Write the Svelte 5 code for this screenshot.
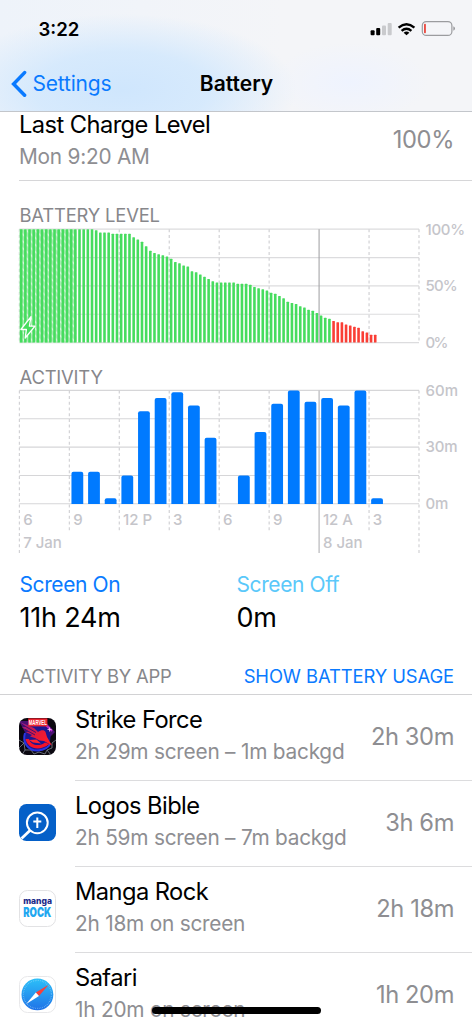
<script>
  const levels = [
    100, 100, 100, 100, 100, 100, 100, 100, 100, 100, 100, 100, 100, 100, 100, 100, 100, 100,
    99, 97, 97, 97, 96, 96, 96, 96, 96, 93, 91, 89, 85, 81, 79, 78, 77, 76, 74, 71, 70, 68,
    67, 63, 62, 60, 58, 56, 54, 53, 53, 53, 53, 53, 52, 52, 52, 51, 49, 48, 47, 46, 44, 43,
    41, 39, 36, 35, 34, 32, 31, 29, 28, 26, 24, 22, 21, 19, 18, 18, 16, 15, 14, 13, 10, 9, 7, 7
  ];

  // minutes of use per hour, starting at 6 AM
  const minutes = [0, 0, 0, 17, 17, 3, 15, 49, 56, 59, 52, 35, 0, 15, 38, 53, 60, 54, 56, 52, 60, 3];

  const hours = ['6', '9', '12 P', '3', '6', '9', '12 A', '3'];
  const gridX = [0, 1, 2, 3, 4, 5, 6, 7, 8].map((i) => 19.4 + i * 49.95);
  const gridY = [0, 1, 2, 3, 4].map((i) => i * 28.35);

  const apps = [
    { id: 'strike', name: 'Strike Force', detail: '2h 29m screen – 1m backgd', time: '2h 30m' },
    { id: 'logos', name: 'Logos Bible', detail: '2h 59m screen – 7m backgd', time: '3h 6m' },
    { id: 'manga', name: 'Manga Rock', detail: '2h 18m on screen', time: '2h 18m' },
    { id: 'safari', name: 'Safari', detail: '1h 20m on screen', time: '1h 20m' }
  ];
</script>

<div class="screen">
  <header>
    <div class="status">
      <span class="clock">3:22</span>
      <svg class="indicators" width="86" height="16" viewBox="370 21 86 16">
        <rect x="370.6" y="30.2" width="4" height="5" rx="1" />
        <rect x="376.2" y="28" width="4" height="7.2" rx="1" />
        <rect x="382" y="25.4" width="4" height="9.8" rx="1" fill="#c9cacd" />
        <rect x="387.7" y="22.9" width="4" height="12.3" rx="1" fill="#c9cacd" />
        <g fill="none" stroke="#000" stroke-width="2.4">
          <path d="M398.6 27.6Q406.5 20.9 414.4 27.6" />
          <path d="M401.6 30.8Q406.5 26.7 411.4 30.8" />
        </g>
        <path d="M403.6 32.8Q406.5 30.4 409.4 32.8L406.5 35.3Z" />
        <rect x="422.3" y="21.6" width="29.6" height="13.8" rx="4" fill="none" stroke="#9b9c9f" stroke-width="1.2" />
        <rect x="424" y="23.8" width="1.9" height="9.4" rx="0.8" fill="#ea4e45" />
        <path d="M453.4 26.3Q455 27 455 28.5T453.4 30.8Z" fill="#929396" />
      </svg>
    </div>
    <nav>
      <a class="back" href="#settings">
        <svg width="17" height="28" viewBox="0 0 17 28">
          <path d="M14.6 2.6L3.6 14L14.6 25.2" fill="none" stroke="#0a7aff" stroke-width="3.5" stroke-linecap="round" stroke-linejoin="miter" />
        </svg>
        <span>Settings</span>
      </a>
      <h1>Battery</h1>
    </nav>
  </header>

  <section class="charge">
    <div>
      <div class="title">Last Charge Level</div>
      <div class="sub">Mon 9:20 AM</div>
    </div>
    <span class="value">100%</span>
  </section>

  <h2 class="level-heading">BATTERY LEVEL</h2>
  <svg class="chart" width="472" height="136" viewBox="0 -1.2 472 136">
    <defs>
      <pattern id="hatch" width="8.33" height="7" patternUnits="userSpaceOnUse">
        <rect width="8.33" height="7" fill="#a9ebb3" />
        <path d="M-2 -1.7L10.3 8.7M-2 5.3L2 8.7M6.3 -1.7L10.3 1.7" stroke="#fff" stroke-width="1.7" opacity="0.6" />
      </pattern>
    </defs>
    {#each gridY as y}
      <line x1="19.4" x2="419" y1={y} y2={y} stroke="#dcdcde" stroke-width="1.2" />
    {/each}
    {#each gridX as x, i}
      {#if i !== 6}
        <line x1={x} x2={x} y1="0" y2="113.4" class="dash" />
      {/if}
    {/each}
    <rect x="19.4" y="0" width="57" height="113.4" fill="url(#hatch)" />
    {#each levels as level, i}
      <rect
        x={19.9 + i * 4.165}
        y={113.4 * (1 - level / 100)}
        width="2.6"
        height={1.134 * level}
        rx="0.5"
        fill={level < 20 ? '#fa3e35' : '#46dc5e'}
      />
    {/each}
    <line x1="319.1" x2="319.1" y1="0" y2="113.4" stroke="#a0a0a4" stroke-width="1.3" opacity="0.8" />
    <path d="M31 87.4L20.9 100.3H26.4L25.2 108.8L35 97H29.4Z" fill="#46dc5e" stroke="#fff" stroke-width="1.3" stroke-linejoin="round" />
    <g class="label">
      <text x="425.6" y="5.6" textLength="39.5">100%</text>
      <text x="425.6" y="62.3" textLength="32">50%</text>
      <text x="425.6" y="119" textLength="22.7">0%</text>
    </g>
  </svg>

  <h2 class="activity-heading">ACTIVITY</h2>
  <svg class="chart" width="472" height="181" viewBox="0 -0.4 472 181">
    {#each gridY as y}
      <line x1="19.4" x2="419" y1={y} y2={y} stroke="#d6d6d8" stroke-width="1.1" />
    {/each}
    {#each gridX as x, i}
      {#if i !== 6}
        <line x1={x} x2={x} y1="0" y2={i === 0 || i === 8 ? 162.5 : 141.5} class="dash" />
      {/if}
    {/each}
    <line x1="319.1" x2="319.1" y1="0" y2="162.5" stroke="#bdbdc0" stroke-width="1.3" />
    {#each minutes as m, i}
      {#if m}
        {@const h = m * 1.89}
        {@const x = 21.5 + i * 16.65}
        <path d="M{x} 113.6V{115.4 - h}Q{x} {113.4 - h} {x + 2} {113.4 - h}H{x + 9.8}Q{x + 11.8} {113.4 - h} {x + 11.8} {115.4 - h}V113.6Z" fill="#007aff" />
      {/if}
    {/each}
    <g class="label">
      {#each hours as hour, i}
        <text x={gridX[i] + 3.8} y="134.4">{hour}</text>
      {/each}
      <text x="23.2" y="157.4" textLength="38.5">7 Jan</text>
      <text x="323.1" y="157.4" textLength="39.5">8 Jan</text>
      <text x="425.6" y="5.4" textLength="32.5">60m</text>
      <text x="425.6" y="62.1" textLength="32">30m</text>
      <text x="425.6" y="118.8" textLength="22.7">0m</text>
    </g>
  </svg>

  <section class="totals">
    <div>
      <div class="on">Screen On</div>
      <div class="amount">11h 24m</div>
    </div>
    <div>
      <div class="off">Screen Off</div>
      <div class="amount">0m</div>
    </div>
  </section>

  <div class="list-head">
    <span>ACTIVITY BY APP</span>
    <a href="#usage">SHOW BATTERY USAGE</a>
  </div>

  <ul>
    {#each apps as app}
      <li>
        <svg class="icon" width="37" height="37" viewBox="0 0 37 37">
          {#if app.id === 'strike'}
            <defs>
              <clipPath id="tile"><rect width="37" height="37" rx="8" /></clipPath>
              <linearGradient id="wing" x1="0" y1="0" x2="1" y2="0.6">
                <stop offset="0" stop-color="#8a1a8c" />
                <stop offset="0.6" stop-color="#e01a3c" />
                <stop offset="1" stop-color="#ff1a28" />
              </linearGradient>
            </defs>
            <g clip-path="url(#tile)">
              <rect width="37" height="37" fill="#0b0810" />
              <path d="M0 3H26L36 14L30 20L8 18Z" fill="#4a1072" />
              <path d="M0 22L5 25L6 32L12 32L15 36L20 34L26 36L28 32L33 30L33 25L37 22M5 25L0 30M6 32L3 37M28 32L32 37" fill="none" stroke="#8f98a3" stroke-width="0.7" />
              <circle cx="18.5" cy="19" r="13" fill="#1c1690" />
              <path d="M6 15C3 24 9 33 19 32.5C25 32 29 30 31 26" fill="none" stroke="#2a35e0" stroke-width="2" />
              <path d="M6.5 21C8.5 30.5 20 34 30.5 26L26 24.5C20 29 12 27.5 10 21Z" fill="#f4122a" />
              <path d="M1 4L15 10L19 14C22 11.5 25.5 11.5 26.5 14L28 19L33 27.5L25 23L20.5 22.5L16 20L11 18.5L13 17L6.5 14L9.5 13.5L3 9L7 9Z" fill="url(#wing)" />
              <path d="M10 22L17.5 21.5L22 25.5L14 24.5Z" fill="#ff2430" />
              <path d="M3 6.5L17 14.5M6 11.5L16 17" stroke="#3b0d6b" stroke-width="0.9" />
              <path d="M27 7L33 13" stroke="#b92bd0" stroke-width="1.8" />
              <path d="M30.5 9.5V13.5M28.5 11.5H32.5" stroke="#ffc6e6" stroke-width="0.8" />
              <rect x="9.2" y="0.4" width="19.2" height="8" fill="#ed2430" />
              <text x="9.8" y="7.4" class="marvel" textLength="18" lengthAdjust="spacingAndGlyphs">MARVEL</text>
            </g>
          {:else if app.id === 'logos'}
            <rect width="37" height="37" rx="7.5" fill="#0560c8" />
            <g fill="none" stroke="#fff">
              <circle cx="18.3" cy="18.8" r="10.4" stroke-width="2" />
              <path d="M11.2 26.2L2.5 34.4" stroke-width="2.8" />
              <path d="M18.3 13.4V24M14.3 17.4H22.3" stroke-width="2" />
            </g>
          {:else if app.id === 'manga'}
            <rect x="0.5" y="0.5" width="36" height="36" rx="8" fill="#fff" stroke="#e2e2e4" />
            <text x="4.2" y="14.4" class="manga" textLength="28.8" lengthAdjust="spacingAndGlyphs">manga</text>
            <text x="4.2" y="27" class="rock" textLength="28" lengthAdjust="spacingAndGlyphs">ROCK</text>
          {:else}
            <defs>
              <linearGradient id="sky" x1="0" y1="0" x2="0" y2="1">
                <stop offset="0" stop-color="#2cc0f8" />
                <stop offset="1" stop-color="#1f72e8" />
              </linearGradient>
            </defs>
            <rect x="0.5" y="0.5" width="36" height="36" rx="8" fill="#fff" stroke="#e8e8ea" />
            <circle cx="18.4" cy="18.4" r="15.9" fill="url(#sky)" />
            <circle cx="18.4" cy="18.4" r="14" fill="none" stroke="#a6dcfb" stroke-width="1.2" stroke-dasharray="0.5 1.3" opacity="0.8" />
            <path d="M29.6 8.8L16.8 16.4L20 20.1Z" fill="#f6403c" />
            <path d="M7.2 28L16.8 16.4L20 20.1Z" fill="#fff" />
          {/if}
        </svg>
        <div class="info">
          <div class="title">{app.name}</div>
          <div class="sub">{app.detail}</div>
        </div>
        <span class="value">{app.time}</span>
      </li>
    {/each}
  </ul>

  <div class="home-bar"></div>
</div>

<style>
  :global(body) {
    margin: 0;
    background: #fff;
  }

  .screen {
    position: relative;
    width: 472px;
    height: 1024px;
    overflow: hidden;
    background: #fff;
    color: #000;
    font-family: Inter, "Liberation Sans", sans-serif;
  }

  a {
    color: #0a7aff;
    text-decoration: none;
  }

  header {
    position: relative;
    z-index: 1;
    box-sizing: border-box;
    height: 112px;
    border-bottom: 1px solid #c3c6cb;
    background:
      radial-gradient(ellipse 80px 40px at 350px 82px, rgba(238, 243, 255, 0.9), rgba(238, 243, 255, 0)),
      radial-gradient(ellipse 175px 76px at 122px 90px, #cfe6fd 0%, rgba(210, 232, 253, 0.85) 50%, rgba(230, 240, 252, 0) 100%),
      linear-gradient(90deg, #eef3fa, #f4f5f8 60%);
  }

  .status {
    display: flex;
    align-items: center;
    justify-content: space-between;
    height: 58px;
    padding: 0 16px 0 38.5px;
  }

  .clock {
    font-size: 18.6px;
    font-weight: 600;
  }

  nav {
    display: grid;
    grid-template-columns: 1fr auto 1fr;
    align-items: center;
    height: 51px;
  }

  .back {
    display: flex;
    align-items: center;
    gap: 5.5px;
    padding-left: 10px;
    font-size: 21px;
    letter-spacing: -0.2px;
  }

  h1 {
    margin: 0;
    padding-left: 1px;
    font-size: 21px;
    font-weight: 600;
  }

  .charge {
    display: flex;
    align-items: flex-start;
    justify-content: space-between;
    box-sizing: border-box;
    height: 71px;
    margin: -2px 0 0 19px;
    padding-right: 18px;
    border-bottom: 1px solid #d6d6d8;
  }

  .title {
    font-size: 23.7px;
    letter-spacing: -0.57px;
    line-height: 30px;
  }

  .sub {
    color: #8e8e92;
    font-size: 20.8px;
    letter-spacing: -0.22px;
    line-height: 33px;
  }

  .value {
    color: #8e8e92;
    font-size: 23.7px;
    letter-spacing: -0.4px;
  }

  .charge .value {
    line-height: 60px;
  }

  h2 {
    margin: 0;
    padding-left: 19.5px;
    color: #87878b;
    font-size: 18.4px;
    font-weight: 400;
    letter-spacing: -0.18px;
  }

  .level-heading {
    padding-top: 22px;
    line-height: 25px;
  }

  .activity-heading {
    line-height: 26px;
  }

  .chart {
    display: block;
    overflow: visible;
  }

  .dash {
    stroke: #d2d2d5;
    stroke-width: 1.2;
    stroke-dasharray: 3 2.7;
  }

  .label {
    fill: #c5c5ca;
    font-size: 15px;
    font-weight: 500;
  }

  .totals {
    display: grid;
    grid-template-columns: 217px 1fr;
    height: 65px;
    padding-left: 19.5px;
    font-size: 21px;
    letter-spacing: -0.4px;
    line-height: 28px;
  }

  .on {
    color: #0a7aff;
  }

  .off {
    color: #5ac8fa;
  }

  .amount {
    font-size: 27px;
    letter-spacing: -0.2px;
    line-height: 37px;
  }

  .list-head {
    display: flex;
    justify-content: space-between;
    padding: 23px 18px 0 19.5px;
    border-bottom: 1px solid #d2d2d4;
    color: #87878b;
    font-size: 18.4px;
    letter-spacing: -0.25px;
    line-height: 35px;
  }

  .list-head a {
    letter-spacing: -0.1px;
  }

  ul {
    margin: 0;
    padding: 0;
    list-style: none;
  }

  li {
    display: flex;
    height: 86px;
    padding-left: 19px;
  }

  .icon {
    flex: none;
    margin-top: 23px;
  }

  .info {
    flex: 1;
    box-sizing: border-box;
    margin-left: 19px;
    padding-top: 10px;
    border-bottom: 1px solid #dcdcde;
    white-space: nowrap;
  }

  li .value {
    box-sizing: border-box;
    padding-right: 18px;
    border-bottom: 1px solid #dcdcde;
    line-height: 84px;
  }

  .marvel {
    fill: #fff;
    font-family: "Liberation Sans", sans-serif;
    font-size: 8px;
    font-weight: 700;
  }

  .manga {
    fill: #1b2a8a;
    font-size: 8.5px;
    font-weight: 800;
  }

  .rock {
    fill: #22a7f0;
    font-size: 13.4px;
    font-weight: 900;
  }

  .home-bar {
    position: absolute;
    left: 152px;
    bottom: 10px;
    width: 169px;
    height: 7px;
    border-radius: 4px;
    background: #000;
  }
</style>
